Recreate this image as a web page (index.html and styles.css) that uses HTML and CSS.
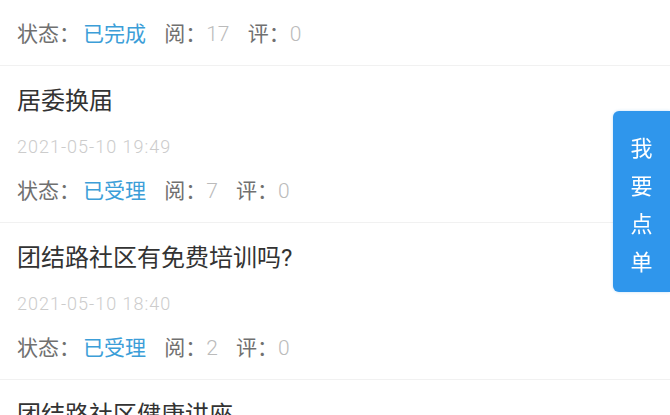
FILE: index.html
```html
<!DOCTYPE html>
<html lang="zh-CN">
<head>
    <meta charset="UTF-8">
    <meta name="viewport" content="width=device-width, initial-scale=1.0">
    <title>社区点单</title>
    <link rel="stylesheet" href="styles.css">
</head>
<body>
    <div class="list">
        <div class="item">
            <div class="title">团结路社区志愿服务</div>
            <div class="date">2021-05-11 09:12</div>
            <div class="meta">
                <span class="label">状态：</span><span class="state">已完成</span>
                <span class="label count">阅：</span><span class="num">17</span>
                <span class="label count">评：</span><span class="num">0</span>
            </div>
        </div>
        <div class="item">
            <div class="title">居委换届</div>
            <div class="date">2021-05-10 19:49</div>
            <div class="meta">
                <span class="label">状态：</span><span class="state">已受理</span>
                <span class="label count">阅：</span><span class="num">7</span>
                <span class="label count">评：</span><span class="num">0</span>
            </div>
        </div>
        <div class="item">
            <div class="title">团结路社区有免费培训吗?</div>
            <div class="date">2021-05-10 18:40</div>
            <div class="meta">
                <span class="label">状态：</span><span class="state">已受理</span>
                <span class="label count">阅：</span><span class="num">2</span>
                <span class="label count">评：</span><span class="num">0</span>
            </div>
        </div>
        <div class="item">
            <div class="title">团结路社区健康讲座</div>
            <div class="date">2021-05-10 16:05</div>
            <div class="meta">
                <span class="label">状态：</span><span class="state">已受理</span>
                <span class="label count">阅：</span><span class="num">3</span>
                <span class="label count">评：</span><span class="num">0</span>
            </div>
        </div>
    </div>
    <div class="order-btn">
        <span>我</span>
        <span>要</span>
        <span>点</span>
        <span>单</span>
    </div>
</body>
</html>
```

FILE: styles.css
```css
html, body {
    margin: 0;
    height: 100%;
    overflow: hidden;
}
body {
    background: #fff;
    font-family: Roboto, "Noto Sans CJK SC", sans-serif;
}
.list {
    margin-top: -91px;
}
.item {
    padding: 19px 17px 17px;
    border-bottom: 1px solid #f1f1f1;
}
.title {
    font-size: 24px;
    line-height: 32px;
    color: #333;
}
.date {
    margin-top: 18px;
    font-size: 18px;
    line-height: 24px;
    color: #cccccc;
    font-weight: 300;
    letter-spacing: 1px;
}
.meta {
    margin-top: 18px;
    font-size: 21px;
    line-height: 28px;
    white-space: nowrap;
}
.label {
    color: #707070;
}
.state {
    color: #3c9ed8;
    margin-left: 3px;
}
.count {
    margin-left: 13px;
}
.num {
    color: #bbb;
    font-weight: 300;
}
.order-btn {
    position: fixed;
    right: 0;
    top: 111px;
    width: 57px;
    height: 181px;
    box-sizing: border-box;
    padding-top: 16px;
    background: #2f96ec;
    border-radius: 6px 0 0 6px;
    box-shadow: 0 0 3px rgba(47, 150, 236, 0.3);
    display: flex;
    flex-direction: column;
    align-items: center;
}
.order-btn span {
    color: #fff;
    font-size: 22px;
    line-height: 38px;
    font-family: "Noto Sans CJK SC", sans-serif;
}
```
